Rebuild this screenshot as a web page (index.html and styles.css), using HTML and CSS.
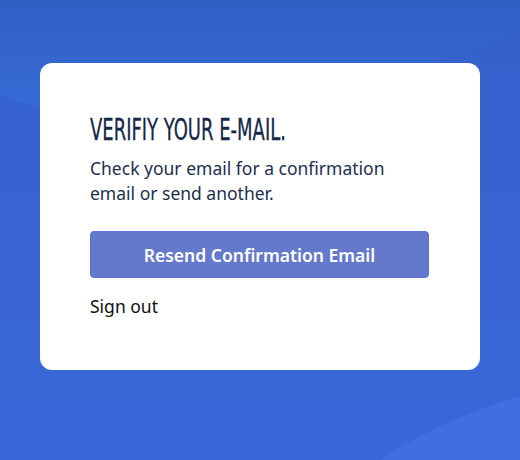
FILE: index.html
```html
<!DOCTYPE html>
<html lang="en">
<head>
<meta charset="utf-8">
<title>Verify your e-mail</title>
<link rel="stylesheet" href="styles.css">
</head>
<body>
<svg class="bg" viewBox="0 0 520 460" preserveAspectRatio="none" aria-hidden="true">
  <defs>
    <linearGradient id="gTop" x1="0" y1="0" x2="0" y2="1">
      <stop offset="0" stop-color="#3160c4"/>
      <stop offset="1" stop-color="#376cd7"/>
    </linearGradient>
    <linearGradient id="gBase" x1="0" y1="0" x2="0" y2="1">
      <stop offset="0" stop-color="#3460cb"/>
      <stop offset="1" stop-color="#3a68d8"/>
    </linearGradient>
  </defs>
  <rect x="0" y="0" width="520" height="460" fill="url(#gBase)"/>
  <path d="M0,0 L520,0 L520,30 C340,100 180,163 0,95 Z" fill="url(#gTop)"/>
  <path d="M380,460 Q440,420 520,396 L520,460 Z" fill="#3f6fe0"/>
</svg>
<main class="page">
  <section class="card">
    <h1 class="title"><span class="title-text">VERIFIY YOUR E-MAIL.</span></h1>
    <p class="lead">Check your email for a confirmation email or send another.</p>
    <button class="btn" type="button">Resend Confirmation Email</button>
    <a class="signout" href="#">Sign out</a>
  </section>
</main>
</body>
</html>
```

FILE: styles.css
```css
html, body {
  margin: 0;
  padding: 0;
  height: 100%;
}
body {
  position: relative;
  overflow: hidden;
  background: #3764d0;
  font-family: "Noto Sans", "Open Sans", sans-serif;
}
.bg {
  position: absolute;
  inset: 0;
  width: 100%;
  height: 100%;
  z-index: 0;
}
.page {
  position: relative;
  z-index: 1;
  padding: 63px 40px 0;
}
.card {
  background: #ffffff;
  border-radius: 12px;
  height: 307px;
  box-sizing: border-box;
  padding: 48px 51px 0 50px;
  display: flex;
  flex-direction: column;
  align-items: stretch;
}
.title {
  margin: 0;
  font-family: "DejaVu Sans Condensed", "DejaVu Sans", sans-serif;
  font-stretch: condensed;
  font-weight: 400;
  font-size: 31px;
  line-height: 36px;
  color: #152848;
  white-space: nowrap;
  -webkit-text-stroke: 0.3px #152848;
}
.title-text {
  display: inline-block;
  transform: scaleX(0.645);
  transform-origin: left center;
}
.lead {
  margin: 9px 0 0;
  max-width: 300px;
  font-size: 17.5px;
  line-height: 25px;
  color: #1d2f4e;
}
.btn {
  margin-top: 25px;
  height: 47px;
  border: 1px solid #5a70d6;
  border-radius: 4px;
  background: #6479cb;
  color: #ffffff;
  font-family: "Noto Sans", "Open Sans", sans-serif;
  font-weight: 600;
  font-size: 17.5px;
  cursor: pointer;
}
.signout {
  margin-top: 15px;
  align-self: flex-start;
  font-size: 17.5px;
  line-height: 26px;
  color: #111111;
  text-decoration: none;
}
```
